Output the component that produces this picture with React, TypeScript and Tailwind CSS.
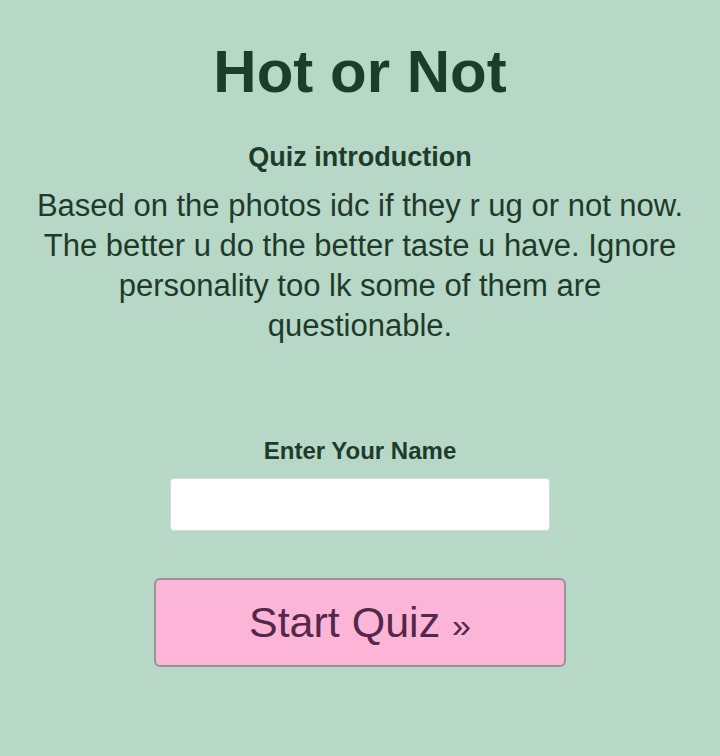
import React, { useState } from 'react';

const BODY_LINES = [
  'Based on the photos idc if they r ug or not now.',
  'The better u do the better taste u have. Ignore',
  'personality too lk some of them are',
  'questionable.',
];

export default function App() {
  const [name, setName] = useState('');

  return (
    <div className="min-h-[756px] w-[720px] bg-[#b7d8c7] font-['Liberation_Sans',Arial,sans-serif] text-center flex flex-col items-center pt-[42px]">
      <h1 className="text-[60px] leading-none font-bold text-[#1c3d2a]">Hot or Not</h1>

      <h2 className="mt-[42px] text-[27px] leading-none font-bold text-[#1f3b2b]">Quiz introduction</h2>

      <p className="mt-[15px] text-[31px] leading-[40px] text-[#1f3a2b]">
        {BODY_LINES.map((line) => (
          <span key={line} className="block whitespace-nowrap">
            {line}
          </span>
        ))}
      </p>

      <label className="mt-[93px] text-[24px] leading-none font-bold text-[#1f3b2b]">Enter Your Name</label>

      <input
        value={name}
        onChange={(e) => setName(e.target.value)}
        className="mt-[15px] w-[380px] h-[53px] bg-white rounded-[4px] border border-[#d6dcd8] outline-none px-3 text-[20px]"
      />

      <button className="mt-[47px] w-[412px] h-[89px] bg-[#fdb5d7] border-2 border-[#9d8f96] rounded-[6px] text-[43px] leading-none text-[#54284a]">
        Start Quiz <span className="text-[34px]">»</span>
      </button>
    </div>
  );
}
